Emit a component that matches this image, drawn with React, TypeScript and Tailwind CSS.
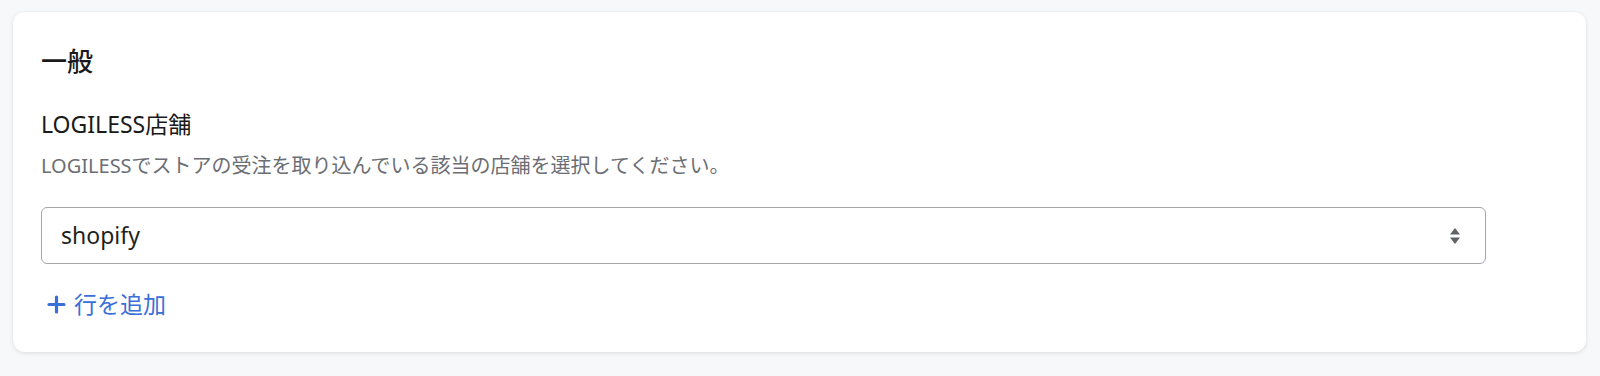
import React from 'react';

const App = () => {
  return (
    <div
      className="min-h-screen bg-[#f7f8fa] pl-[13px] pt-[12px]"
      style={{ fontFamily: '"Noto Sans", "Noto Sans CJK JP", sans-serif' }}
    >
      <div className="w-[1573px] h-[340px] bg-white rounded-[12px] shadow-[0_1px_4px_rgba(0,0,0,0.12)] pl-[28px] pt-[31px]">
        <h2 className="text-[26px] leading-[36px] font-medium text-[#1a1a1a]">一般</h2>
        <div className="mt-[29px] text-[23px] leading-[32px] text-[#1a1a1a]">LOGILESS店舗</div>
        <p className="mt-[12px] text-[20px] leading-[28px] text-[#6b6e73]">
          LOGILESSでストアの受注を取り込んでいる該当の店舗を選択してください。
        </p>
        <div className="mt-[27px] w-[1445px] h-[57px] border border-[#a3a6ab] rounded-[6px] flex items-center justify-between pl-[19px] pr-[24px]">
          <span className="text-[23px] text-[#1f1f1f]">shopify</span>
          <svg width="12" height="18" viewBox="0 0 12 18" fill="#5f6266">
            <path d="M6 1 L11 7.5 H1 Z" />
            <path d="M6 17 L11 10.5 H1 Z" />
          </svg>
        </div>
        <button className="mt-[24px] ml-[6px] flex items-center gap-[8px] text-[#3a6fd8] text-[23px] leading-[32px]">
          <svg width="19" height="19" viewBox="0 0 19 19" stroke="#3a6fd8" strokeWidth="3.2" strokeLinecap="round">
            <path d="M9.5 2 V17 M2 9.5 H17" />
          </svg>
          <span>行を追加</span>
        </button>
      </div>
    </div>
  );
};

export default App;
